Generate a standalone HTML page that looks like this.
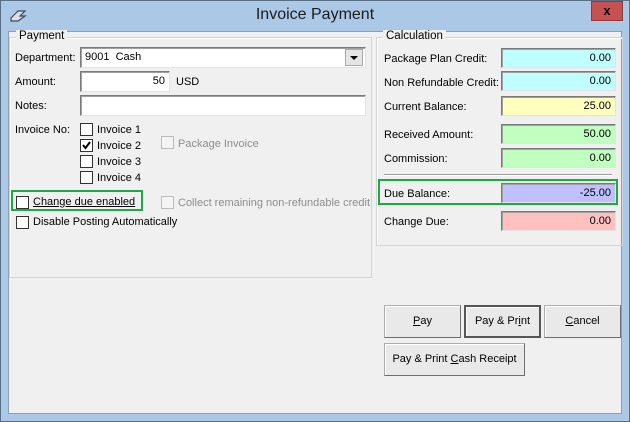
<!DOCTYPE html>
<html><head><style>
*{box-sizing:border-box;margin:0;padding:0}
body{width:630px;height:422px;background:#abc9e6;font-family:"Liberation Sans",sans-serif;font-size:11px;color:#000;position:relative;overflow:hidden}
.a{position:absolute}
.win{left:0;top:0;width:630px;height:422px;border:1px solid #5a6e84}
.client{left:8px;top:31px;width:614px;height:383px;background:#f0f0f0;border:1px solid #8aa0b8}
.grp{border:1px solid #d5d5d5;box-shadow:inset 1px 1px 0 #fff}
.leg{background:#f0f0f0;padding:0 3px;top:-8px;left:6px;color:#000;font-size:11.5px}
.tb{background:#fff;border:1px solid #7a7a7a;border-right-color:#e3e3e3;border-bottom-color:#e3e3e3;box-shadow:inset 1px 1px 0 #a0a0a0}
.cb{width:13px;height:13px;border:1px solid #333;background:#fff}
.cb.d{border-color:#bcbcbc;background:#f4f4f4}
.fld{height:20px;border:1px solid #7a7a7a;border-right-color:#e3e3e3;border-bottom-color:#e3e3e3;box-shadow:inset 1px 1px 0 #a0a0a0;text-align:right;padding:3px 4px 0 0;width:115px;left:501px}
.btn{background:#e9e9e9;border:1px solid #adadad;border-right-color:#6e6e6e;border-bottom-color:#6e6e6e;box-shadow:inset 1px 1px 0 #fff;text-align:center;line-height:31px}
</style></head><body>
<div class="a win"></div>
<svg class="a" style="left:8px;top:9px" width="20" height="14"><path d="M3 9 L10 2 L17 2 L12 7 L17 7 L10 12 L3 12 Z" fill="#dde" stroke="#445" stroke-width="1.2"/></svg>
<div class="a" style="left:0;width:630px;top:6px;text-align:center;font-size:16px;color:#1c1c1c">Invoice Payment</div>
<div class="a" style="left:591px;top:1px;width:32px;height:20px;background:#c75050;border:1px solid #8c3a3a;color:#000;font-weight:bold;text-align:center;font-size:13px;line-height:17px">x</div>
<div class="a client"></div>

<div class="a grp" style="left:9px;top:37px;width:363px;height:241px"><span class="a leg">Payment</span></div>
<div class="a" style="left:15px;top:52px">Department:</div>
<div class="a tb" style="left:80px;top:47px;width:286px;height:21px;padding:3px 4px">9001&nbsp; Cash</div>
<div class="a" style="left:345px;top:49px;width:18px;height:17px;background:#e5e5e5;border:1px solid #aaa"><svg width="16" height="15"><path d="M4 6 L12 6 L8 10 Z" fill="#000"/></svg></div>
<div class="a" style="left:15px;top:76px">Amount:</div>
<div class="a tb" style="left:80px;top:71px;width:90px;height:21px;text-align:right;padding:3px 4px">50</div>
<div class="a" style="left:176px;top:76px">USD</div>
<div class="a" style="left:15px;top:100px">Notes:</div>
<div class="a tb" style="left:80px;top:95px;width:286px;height:21px"></div>
<div class="a" style="left:15px;top:124px">Invoice No:</div>
<div class="a cb" style="left:80px;top:123px"></div><div class="a" style="left:97px;top:124px">Invoice 1</div>
<div class="a cb" style="left:80px;top:139px"><svg width="11" height="11" style="display:block"><path d="M2 5 L4.5 8 L9 2" stroke="#000" stroke-width="2" fill="none"/></svg></div><div class="a" style="left:97px;top:140px">Invoice 2</div>
<div class="a cb" style="left:80px;top:155px"></div><div class="a" style="left:97px;top:156px">Invoice 3</div>
<div class="a cb" style="left:80px;top:171px"></div><div class="a" style="left:97px;top:172px">Invoice 4</div>
<div class="a cb d" style="left:161px;top:136px"></div><div class="a" style="left:178px;top:138px;color:#8d8d8d">Package Invoice</div>
<div class="a" style="left:11px;top:190px;width:132px;height:21px;border:2px solid #22a746"></div>
<div class="a cb" style="left:16px;top:196px"></div><div class="a" style="left:33px;top:196px;text-decoration:underline">Change due enabled</div>
<div class="a cb d" style="left:161px;top:196px"></div><div class="a" style="left:178px;top:197px;color:#8d8d8d">Collect remaining non-refundable credit</div>
<div class="a cb" style="left:16px;top:216px"></div><div class="a" style="left:33px;top:216px">Disable Posting Automatically</div>

<div class="a grp" style="left:376px;top:37px;width:247px;height:209px"><span class="a leg">Calculation</span></div>
<div class="a" style="left:384px;top:53px">Package Plan Credit:</div><div class="a fld" style="top:48px;background:#c0ffff">0.00</div>
<div class="a" style="left:384px;top:77px">Non Refundable Credit:</div><div class="a fld" style="top:71px;background:#c0ffff">0.00</div>
<div class="a" style="left:384px;top:101px">Current Balance:</div><div class="a fld" style="top:96px;background:#ffffc0">25.00</div>
<div class="a" style="left:384px;top:129px">Received Amount:</div><div class="a fld" style="top:124px;background:#c0ffc0">50.00</div>
<div class="a" style="left:384px;top:153px">Commission:</div><div class="a fld" style="top:148px;background:#c0ffc0">0.00</div>
<div class="a" style="left:384px;top:174px;width:228px;height:2px;border-top:1px solid #a0a0a0;border-bottom:1px solid #fff"></div>
<div class="a" style="left:378px;top:179px;width:240px;height:26px;border:2px solid #22a746"></div>
<div class="a" style="left:384px;top:188px">Due Balance:</div><div class="a fld" style="top:183px;background:#c0c0ff">-25.00</div>
<div class="a" style="left:384px;top:216px">Change Due:</div><div class="a fld" style="top:211px;background:#ffc0c0">0.00</div>

<div class="a btn" style="left:384px;top:305px;width:77px;height:33px"><u>P</u>ay</div>
<div class="a btn" style="left:464px;top:305px;width:77px;height:33px;border:2px solid #555;line-height:29px">Pay &amp; Pr<u>i</u>nt</div>
<div class="a btn" style="left:544px;top:305px;width:77px;height:33px"><u>C</u>ancel</div>
<div class="a btn" style="left:384px;top:343px;width:141px;height:33px">Pay &amp; Print <u>C</u>ash Receipt</div>
</body></html>
